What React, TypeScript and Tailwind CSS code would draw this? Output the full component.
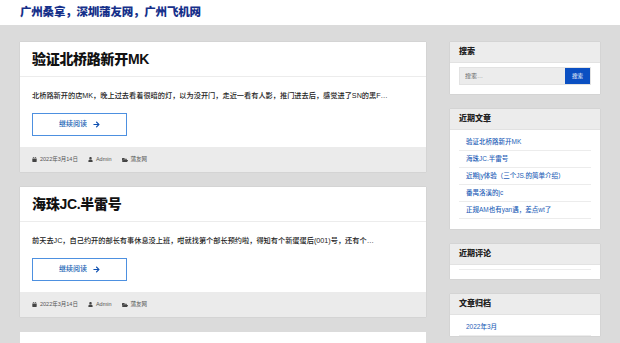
import { FaArrowRight, FaCalendar, FaFolderOpen, FaUser } from "react-icons/fa";

const font = "font-['Liberation_Sans','Noto_Sans_CJK_SC',sans-serif]";

interface Post {
  title: string;
  excerpt: string;
  date: string;
  author: string;
  category: string;
}

const posts: Post[] = [
  {
    title: "验证北桥路新开MK",
    excerpt:
      "北桥路新开的店MK，晚上过去看着很暗的灯，以为没开门，走近一看有人影，推门进去后，感觉进了SN的黑F…",
    date: "2022年3月14日",
    author: "Admin",
    category: "蒲友网",
  },
  {
    title: "海珠JC.半雷号",
    excerpt:
      "前天去JC，自己约开的部长有事休息没上班，咁就找第个部长预约啦，得知有个新蛋蛋后(001)号，还有个…",
    date: "2022年3月14日",
    author: "Admin",
    category: "蒲友网",
  },
];

const recent = [
  "验证北桥路新开MK",
  "海珠JC.半雷号",
  "近期jy体验（三个JS.的简单介绍）",
  "番禺洛溪的jc",
  "正规AM也有yan遇，差点wt了",
];

const PostCard = ({ post }: { post: Post }) => {
  return (
    <div className="bg-white shadow-[0_0_1px_rgba(0,0,0,0.2)]">
      <div className="h-[35px] flex items-center px-3 border-b border-[#ececec]">
        <h2 className="text-[14px] font-black text-[#111] leading-none tracking-[-0.3px]">
          {post.title}
        </h2>
      </div>
      <div className="px-3 pt-[13px] pb-[11px]">
        <p className="text-[7.2px] leading-[12px] text-[#222] font-medium">{post.excerpt}</p>
        <a className="mt-[11px] w-[95px] h-[23px] border border-[#4d90e0] flex items-center justify-center gap-[6px] text-[7px] text-[#1a5fb4] font-medium">
          继续阅读
          <FaArrowRight className="w-[7px] h-[7px] text-[#0d4fb0]" />
        </a>
      </div>
      <div className="h-[25px] bg-[#ebebeb] flex items-center px-3 gap-[10px] text-[5.5px] text-[#555]">
        <span className="flex items-center gap-[3px]">
          <FaCalendar className="w-[5px] h-[5px] text-[#444]" />
          {post.date}
        </span>
        <span className="flex items-center gap-[3px]">
          <FaUser className="w-[5px] h-[5px] text-[#444]" />
          {post.author}
        </span>
        <span className="flex items-center gap-[3px]">
          <FaFolderOpen className="w-[6px] h-[6px] text-[#444]" />
          {post.category}
        </span>
      </div>
    </div>
  );
};

const Widget = ({ title, children }: { title: string; children: React.ReactNode }) => {
  return (
    <div className="bg-white shadow-[0_0_1px_rgba(0,0,0,0.2)]">
      <div className="h-[21px] bg-[#ececec] border-b border-[#e2e2e2] flex items-center px-[9px]">
        <h3 className="text-[8px] font-black text-[#222]">{title}</h3>
      </div>
      {children}
    </div>
  );
};

export default function App() {
  return (
    <div className={`${font} w-[620px] h-[343px] overflow-hidden bg-[#dbdbdb]`}>
      <header className="h-[25px] bg-white flex items-center px-5">
        <h1 className="text-[11.5px] font-black text-[#16308a] tracking-[-0.2px]">
          广州桑拿，深圳蒲友网，广州飞机网
        </h1>
      </header>

      <div className="flex gap-6 px-5 pt-[17px]">
        <main className="w-[406px] flex flex-col gap-[15px]">
          {posts.map((p) => (
            <PostCard key={p.title} post={p} />
          ))}
          <div className="bg-white h-[40px]" />
        </main>

        <aside className="w-[150px] flex flex-col gap-[15px]">
          <Widget title="搜索">
            <div className="p-[9px] pt-[4px]">
              <div className="flex h-[18px] border border-[#e2e2e2] bg-[#ececec]">
                <input
                  className="flex-1 min-w-0 bg-transparent px-[5px] text-[6px] text-[#555] outline-none placeholder:text-[#666]"
                  placeholder="搜索…"
                />
                <button className="w-[25px] bg-[#0a4fc2] text-white text-[5.5px]">搜索</button>
              </div>
            </div>
          </Widget>

          <Widget title="近期文章">
            <ul className="px-[9px] pt-[4px] pb-[10px]">
              {recent.map((r) => (
                <li
                  key={r}
                  className="h-[17px] flex items-center pl-[7px] border-b border-[#ececec] text-[6.5px] text-[#1f5fb8] font-medium"
                >
                  {r}
                </li>
              ))}
            </ul>
          </Widget>

          <Widget title="近期评论">
            <div className="px-[9px] pt-[4px] pb-[9px]">
              <div className="border-b border-[#ececec]" />
            </div>
          </Widget>

          <Widget title="文章归档">
            <ul className="px-[9px] pt-[4px]">
              <li className="h-[17px] flex items-center pl-[7px] border-b border-[#ececec] text-[6.5px] text-[#1f5fb8] font-medium">
                2022年3月
              </li>
            </ul>
          </Widget>
        </aside>
      </div>
    </div>
  );
}
